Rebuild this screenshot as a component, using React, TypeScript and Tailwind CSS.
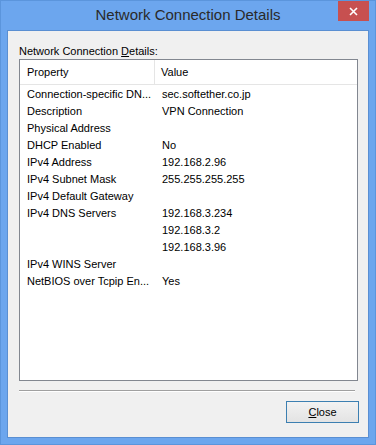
const rows: [string, string][] = [
  ["Connection-specific DN...", "sec.softether.co.jp"],
  ["Description", "VPN Connection"],
  ["Physical Address", ""],
  ["DHCP Enabled", "No"],
  ["IPv4 Address", "192.168.2.96"],
  ["IPv4 Subnet Mask", "255.255.255.255"],
  ["IPv4 Default Gateway", ""],
  ["IPv4 DNS Servers", "192.168.3.234"],
  ["", "192.168.3.2"],
  ["", "192.168.3.96"],
  ["IPv4 WINS Server", ""],
  ["NetBIOS over Tcpip En...", "Yes"],
];

const App = () => {
  return (
    <div
      className="relative flex flex-col w-[376px] h-[445px] bg-[#6ca6ee] border border-[#5b95dc] text-black"
      style={{ fontFamily: '"Liberation Sans", Arial, sans-serif' }}
    >
      {/* Title bar */}
      <div className="flex justify-center items-center h-[29px] text-[15px] text-[#2a2a2a]">
        Network Connection Details
      </div>
      <button
        type="button"
        className="top-0 right-[6px] absolute flex justify-center items-center bg-[#c75050] w-[31px] h-[20px] text-white"
      >
        <svg width="9" height="9" viewBox="0 0 9 9">
          <path d="M1 1 L8 8 M8 1 L1 8" stroke="white" strokeWidth="1.6" />
        </svg>
      </button>

      {/* Client area */}
      <div className="flex flex-col mx-[6px] mb-[6px] bg-[#f0f0f0] border border-[#5a8fd2] h-[408px]">
        <div className="mt-[13px] ml-[11px] h-[14px] text-[11px] leading-[14px]">
          Network Connection <span className="underline">D</span>etails:
        </div>

        {/* List */}
        <div className="flex flex-col bg-white mt-[1px] ml-[11px] border border-[#828790] w-[339px] h-[322px] text-[11px]">
          <div className="flex bg-white border-[#e5e5e5] border-b h-[25px]">
            <div className="flex items-center pl-[7px] border-[#e5e5e5] border-r w-[135px]">
              Property
            </div>
            <div className="flex items-center pl-[6px]">Value</div>
          </div>
          <div className="pt-[1px]">
            {rows.map(([k, v], i) => (
              <div key={i} className="flex items-center h-[17px]">
                <div className="pl-[7px] w-[135px] overflow-hidden whitespace-nowrap">
                  {k}
                </div>
                <div className="pl-[7px] whitespace-nowrap">{v}</div>
              </div>
            ))}
          </div>
        </div>

        {/* Separator */}
        <div className="mt-[9px] ml-[11px] border-[#a0a0a0] border-t border-b border-b-white w-[336px]" />

        {/* Buttons */}
        <div className="flex justify-end mt-[9px] pr-[9px]">
          <button
            type="button"
            className="bg-linear-to-b from-[#f2f2f2] to-[#e3e3e3] border border-[#3c7fb1] w-[73px] h-[22px] text-[11px]"
          >
            <span className="underline">C</span>lose
          </button>
        </div>
      </div>
    </div>
  );
};

export default App;
